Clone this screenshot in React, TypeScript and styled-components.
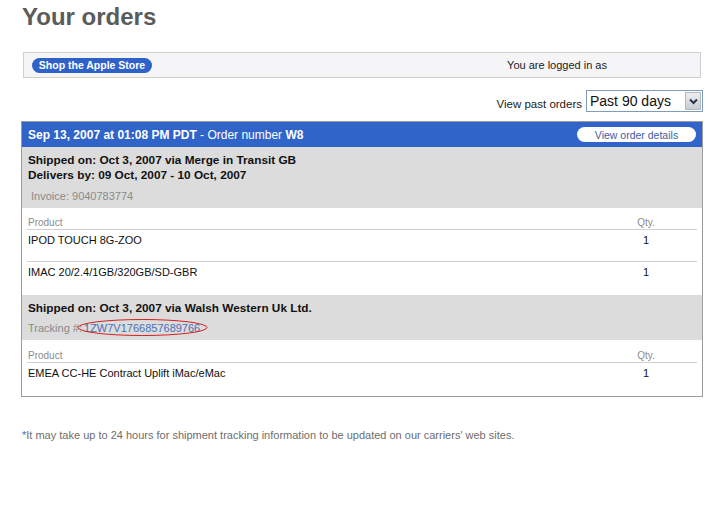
import React from 'react';
import styled, { createGlobalStyle } from 'styled-components';

const GlobalStyle = createGlobalStyle`
  body {
    margin: 0;
    background: #ffffff;
    font-family: 'Liberation Sans', Arial, sans-serif;
  }
`;

const Page = styled.div`
  width: 723px;
  padding: 3px 20px 0 21px;
  box-sizing: border-box;
`;

const Title = styled.h1`
  margin: 0 0 0 1px;
  font-size: 24px;
  line-height: 28px;
  font-weight: bold;
  color: #5b5b5b;
`;

const TopBar = styled.div`
  margin: 21px 2px 0 2px;
  height: 26px;
  box-sizing: border-box;
  border: 1px solid #cfcfcf;
  background: #f5f5f7;
  display: flex;
  align-items: center;
  padding-left: 8px;
`;

const PillButton = styled.span<{ $light?: boolean }>`
  display: inline-flex;
  align-items: center;
  justify-content: center;
  height: 15px;
  border-radius: 8px;
  font-family: 'Liberation Sans', Arial, sans-serif;
  font-size: 10.5px;
  font-weight: ${p => (p.$light ? 'normal' : 'bold')};
  background: ${p => (p.$light ? '#ffffff' : '#2f62c8')};
  color: ${p => (p.$light ? '#3b5da6' : '#ffffff')};
  width: ${p => (p.$light ? '119px' : '120px')};
  box-sizing: border-box;
`;

const LoggedIn = styled.span`
  margin-left: auto;
  margin-right: 93px;
  font-size: 11px;
  color: #222;
`;

const FilterRow = styled.div`
  display: flex;
  justify-content: flex-end;
  align-items: flex-end;
  margin-top: 12px;
  gap: 4px;
`;

const FilterLabel = styled.span`
  font-size: 11.5px;
  color: #222;
  padding-bottom: 2px;
`;

const Select = styled.div`
  width: 117px;
  height: 22px;
  box-sizing: border-box;
  border: 1px solid #7f9db9;
  background: #fff;
  display: flex;
  align-items: center;
  padding-left: 3px;
  font-size: 14px;
  color: #111;
`;

const SelectArrow = styled.span`
  margin-left: auto;
  margin-right: 1px;
  width: 16px;
  height: 18px;
  background: linear-gradient(#eceef2, #c9ccd3);
  border: 1px solid #b4b8c0;
  box-sizing: border-box;
  display: flex;
  align-items: center;
  justify-content: center;
`;

const OrderBox = styled.div`
  margin-top: 9px;
  border: 1px solid #9c9c9c;
  width: 682px;
  box-sizing: border-box;
`;

const OrderHeader = styled.div`
  height: 25px;
  background: #3064c9;
  color: #fff;
  display: flex;
  align-items: center;
  padding: 0 6px;
  font-size: 12px;
`;

const HeaderText = styled.span`
  flex: 1;
`;

const Shipment = styled.div<{ $h: number }>`
  background: #dcdcdc;
  height: ${p => p.$h}px;
  box-sizing: border-box;
  padding: 6px 6px 0 6px;
`;

const ShipLine = styled.div`
  font-size: 11.8px;
  line-height: 15px;
  font-weight: bold;
  color: #111;
`;

const SubLine = styled.div<{ $mt: number }>`
  margin-top: ${p => p.$mt}px;
  font-size: 11px;
  line-height: 13px;
  color: #8a8a8a;
  display: flex;
  align-items: center;
`;

const Tracking = styled.span`
  position: relative;
  color: #4b70b8;
  margin-left: 2px;
`;

const Ellipse = styled.svg`
  position: absolute;
  left: -7px;
  top: -4px;
  pointer-events: none;
`;

const Products = styled.div<{ $h: number }>`
  height: ${p => p.$h}px;
  box-sizing: border-box;
  padding: 0 5px;
  background: #fff;
`;

const Row = styled.div<{ $h: number; $head?: boolean; $line?: boolean }>`
  height: ${p => p.$h}px;
  box-sizing: border-box;
  display: flex;
  align-items: ${p => (p.$head ? 'flex-end' : 'flex-start')};
  padding-top: ${p => (p.$head ? 0 : 4)}px;
  padding-bottom: ${p => (p.$head ? 0 : 0)}px;
  border-bottom: ${p => (p.$line ? '1px solid #cfcfcf' : 'none')};
  font-size: ${p => (p.$head ? 10 : 11)}px;
  line-height: 13px;
  color: ${p => (p.$head ? '#8c8c8c' : '#111')};
`;

const Cell = styled.span`
  flex: 1;
  padding-left: 1px;
`;

const QtyCell = styled.span`
  width: 50px;
  margin-right: 26px;
  text-align: center;
`;

const Footnote = styled.p`
  margin: 32px 0 0 1px;
  font-size: 11px;
  color: #6d6d6d;
`;

const Star = styled.span`
  color: #3b6fc9;
`;

export default function App() {
  return (
    <Page>
      <GlobalStyle />
      <Title>Your orders</Title>

      <TopBar>
        <PillButton>Shop the Apple Store</PillButton>
        <LoggedIn>You are logged in as</LoggedIn>
      </TopBar>

      <FilterRow>
        <FilterLabel>View past orders</FilterLabel>
        <Select>
          Past 90 days
          <SelectArrow>
            <svg width="9" height="7" viewBox="0 0 9 7">
              <path d="M1 1.5 L4.5 5 L8 1.5" stroke="#2a3346" strokeWidth="2" fill="none" />
            </svg>
          </SelectArrow>
        </Select>
      </FilterRow>

      <OrderBox>
        <OrderHeader>
          <HeaderText>
            <b>Sep 13, 2007 at 01:08 PM PDT</b> - Order number <b>W8</b>
          </HeaderText>
          <PillButton $light>View order details</PillButton>
        </OrderHeader>

        <Shipment $h={61}>
          <ShipLine>Shipped on: Oct 3, 2007 via Merge in Transit GB</ShipLine>
          <ShipLine>Delivers by: 09 Oct, 2007 - 10 Oct, 2007</ShipLine>
          <SubLine $mt={7}>&nbsp;Invoice: 9040783774</SubLine>
        </Shipment>

        <Products $h={87}>
          <Row $h={22} $head $line>
            <Cell>Product</Cell>
            <QtyCell>Qty.</QtyCell>
          </Row>
          <Row $h={32} $line>
            <Cell>IPOD TOUCH 8G-ZOO</Cell>
            <QtyCell>1</QtyCell>
          </Row>
          <Row $h={33}>
            <Cell>IMAC 20/2.4/1GB/320GB/SD-GBR</Cell>
            <QtyCell>1</QtyCell>
          </Row>
        </Products>

        <Shipment $h={45}>
          <ShipLine>Shipped on: Oct 3, 2007 via Walsh Western Uk Ltd.</ShipLine>
          <SubLine $mt={6}>
            Tracking #:
            <Tracking>
              1ZW7V1766857689766
              <Ellipse width="131" height="19" viewBox="0 0 131 19">
                <ellipse cx="65.5" cy="9.5" rx="64.5" ry="8" stroke="#d42020" strokeWidth="1" fill="none" />
              </Ellipse>
            </Tracking>
          </SubLine>
        </Shipment>

        <Products $h={56}>
          <Row $h={23} $head $line>
            <Cell>Product</Cell>
            <QtyCell>Qty.</QtyCell>
          </Row>
          <Row $h={33}>
            <Cell>EMEA CC-HE Contract Uplift iMac/eMac</Cell>
            <QtyCell>1</QtyCell>
          </Row>
        </Products>
      </OrderBox>

      <Footnote>
        <Star>*</Star>It may take up to 24 hours for shipment tracking information to be updated on our carriers' web sites.
      </Footnote>
    </Page>
  );
}
